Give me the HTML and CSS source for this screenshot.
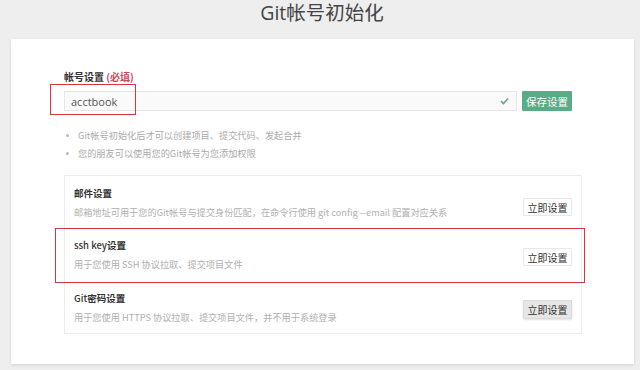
FILE: index.html
```html
<!DOCTYPE html>
<html lang="zh-CN">
<head>
<meta charset="utf-8">
<title>Git帐号初始化</title>
<link rel="stylesheet" href="styles.css">
</head>
<body>
<h1 class="page-title">Git帐号初始化</h1>
<div class="card">
  <div class="field-label">帐号设置 <span class="required">(必填)</span></div>
  <div class="account-row">
    <div class="input">
      <span class="input-text">acctbook</span>
      <svg class="check" viewBox="0 0 10 8" width="9" height="8"><path d="M1 4.2 L3.8 6.8 L9 1.2" fill="none" stroke="#6a9f87" stroke-width="1.8"/></svg>
    </div>
    <button class="btn-save">保存设置</button>
    <div class="annot annot-input"></div>
  </div>
  <ul class="tips">
    <li>Git帐号初始化后才可以创建项目、提交代码、发起合并</li>
    <li>您的朋友可以使用您的Git帐号为您添加权限</li>
  </ul>
  <div class="settings">
    <div class="item item-1">
      <div class="item-text">
        <div class="item-title">邮件设置</div>
        <div class="item-desc">邮箱地址可用于您的Git帐号与提交身份匹配，在命令行使用 git config --email 配置对应关系</div>
      </div>
      <button class="btn-set">立即设置</button>
    </div>
    <div class="item item-2">
      <div class="item-text">
        <div class="item-title"><span class="latin">ssh key</span>设置</div>
        <div class="item-desc">用于您使用 SSH 协议拉取、提交项目文件</div>
      </div>
      <button class="btn-set">立即设置</button>
      <div class="annot annot-ssh"></div>
    </div>
    <div class="item item-3">
      <div class="item-text">
        <div class="item-title"><span class="latin">Git</span>密码设置</div>
        <div class="item-desc">用于您使用 HTTPS 协议拉取、提交项目文件，并不用于系统登录</div>
      </div>
      <button class="btn-set btn-active">立即设置</button>
    </div>
  </div>
</div>
</body>
</html>
```

FILE: styles.css
```css
* { box-sizing: border-box; }
html, body {
  margin: 0;
  padding: 0;
}
body {
  width: 640px;
  height: 370px;
  background: #eeeeee;
  font-family: "Open Sans", "Noto Sans CJK SC", sans-serif;
  color: #333;
  overflow: hidden;
}
.page-title {
  margin: 0;
  height: 28px;
  line-height: 28px;
  font-size: 19.5px;
  font-weight: 400;
  color: #444;
  text-align: center;
  padding: 0 0 0 4px;
  white-space: nowrap;
  transform: translateY(-1px);
}
.card {
  margin: 11px 0 0 11px;
  width: 623px;
  height: 325px;
  background: #fff;
  box-shadow: 0 1px 3px rgba(0,0,0,0.12);
  padding: 30px 0 0 53px;
}
.field-label {
  font-size: 10px;
  line-height: 16px;
  font-weight: 700;
  color: #333;
  font-family: "Noto Sans CJK SC", sans-serif;
}
.required {
  color: #d0455c;
  font-weight: 700;
}
.account-row {
  position: relative;
  display: flex;
  gap: 5px;
  margin-top: 6px;
  height: 20px;
}
.input {
  width: 453px;
  height: 20px;
  background: #fafafa;
  border: 1px solid #e6e6e6;
  display: flex;
  align-items: center;
  justify-content: space-between;
  padding: 0 7px 0 6px;
}
.input-text {
  font-size: 11px;
  color: #555;
}
.btn-save {
  width: 50px;
  height: 20px;
  border: none;
  border-radius: 1px;
  background: #56ad86;
  color: #fff;
  font-size: 10.5px;
  font-family: "Noto Sans CJK SC", sans-serif;
  padding: 0;
}
.annot {
  position: absolute;
  border: 1.5px solid #d8353d;
  pointer-events: none;
}
.annot-input {
  left: -14px;
  top: -7px;
  width: 86px;
  height: 31px;
}
.tips {
  list-style: none;
  margin: 15px 0 0 0;
  padding: 0;
}
.tips li {
  position: relative;
  font-size: 9.2px;
  line-height: 18px;
  color: #aaa;
  padding-left: 14px;
  font-family: "Noto Sans CJK SC", sans-serif;
}
.tips li::before {
  content: "";
  position: absolute;
  left: 2px;
  top: 8px;
  width: 3px;
  height: 3px;
  border-radius: 50%;
  background: #bbb;
}
.settings {
  margin-top: 13px;
  width: 518px;
  border: 1px solid #ececec;
}
.item {
  position: relative;
  display: flex;
  justify-content: space-between;
  align-items: flex-start;
  padding: 9px 9px 0 9px;
}
.item-1 { height: 52px; }
.item-2 { height: 53px; }
.item-3 { height: 52px; }
.item-title {
  font-size: 9.5px;
  line-height: 16px;
  font-weight: 700;
  color: #333;
  font-family: "Noto Sans CJK SC", sans-serif;
}
.item-title .latin {
  font-weight: 500;
  font-size: 9.5px;
}
.item-desc {
  margin-top: 3px;
  font-size: 9.2px;
  line-height: 16px;
  color: #b0b0b0;
  font-family: "Noto Sans CJK SC", sans-serif;
}
.btn-set {
  margin-top: 12px;
  width: 49px;
  height: 18px;
  background: #fff;
  border: 1px solid #e8e8e8;
  border-radius: 1px;
  font-size: 10px;
  color: #333;
  padding: 0;
  font-family: "Noto Sans CJK SC", sans-serif;
}
.item-1 .btn-set { margin-top: 13px; }
.item-2 .btn-set { margin-top: 11px; }
.item-3 .btn-set { margin-top: 10px; height: 19px; }
.btn-active {
  background: #e6e6e6;
  border-color: #dadada;
  box-shadow: 0 1px 2px rgba(0,0,0,0.12);
}
.annot-ssh {
  left: -10px;
  top: 0;
  width: 530px;
  height: 55px;
}
```
